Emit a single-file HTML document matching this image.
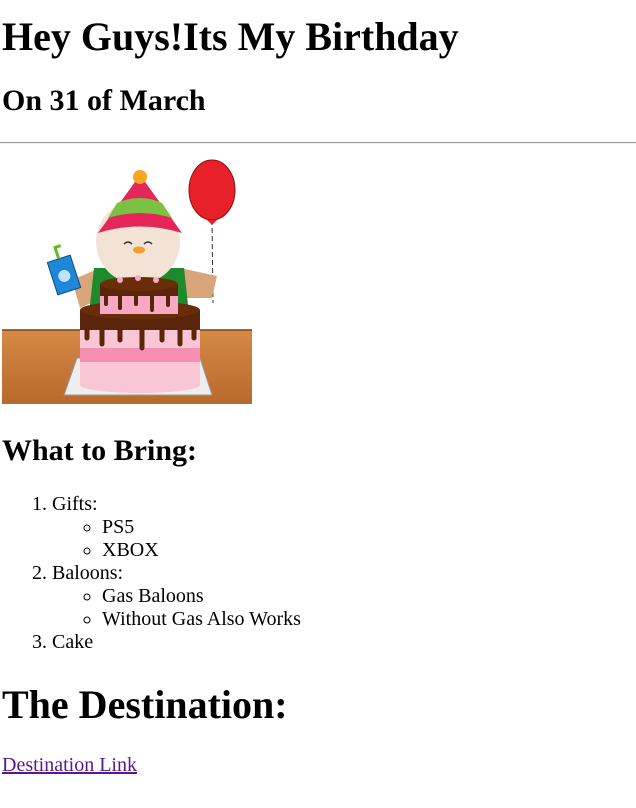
<!DOCTYPE html>
<html><head><meta charset="utf-8"><style>
html,body{margin:0;padding:0;background:#fff;}
body{margin:0 2px;font-family:"Liberation Serif",serif;font-size:20px;color:#000;}
h1{font-size:40px;margin:14px 0 0;line-height:46px;}
h2{font-size:30px;margin:24px 0 0;line-height:34px;}
hr{margin:24px -2px 0;border:0;border-top:1px solid #9a9a9a;border-bottom:1px solid #eee;height:0;}
.img{display:block;margin-top:14px;}
ol{margin:25px 0 0;padding-left:50px;line-height:23px;}
ul{margin:0;padding-left:50px;list-style:circle;}
a{color:#551a8b;}
</style></head><body>
<h1>Hey Guys!Its My Birthday</h1>
<h2>On 31 of March</h2>
<hr>
<svg class="img" width="250" height="246" viewBox="0 0 250 246">
<defs><linearGradient id="w" x1="0" y1="0" x2="0" y2="1"><stop offset="0" stop-color="#d58a45"/><stop offset="1" stop-color="#b8692c"/></linearGradient></defs>
<rect x="0" y="172" width="250" height="74" fill="url(#w)"/>
<line x1="0" y1="172" x2="250" y2="172" stroke="#7a4515" stroke-width="1.5"/>
<line x1="210" y1="62" x2="211" y2="145" stroke="#333" stroke-width="1" stroke-dasharray="5,3"/>
<ellipse cx="210" cy="32" rx="23" ry="30" fill="#e8202a" stroke="#8a1010" stroke-width="1"/>
<path d="M205 62 L215 62 L210 67Z" fill="#e8202a"/>
<path d="M70 122 L98 110 L100 140 L78 150Z" fill="#d9a57a"/>
<path d="M178 110 L215 118 L210 140 L182 140Z" fill="#d9a57a"/>
<path d="M92 110 L182 110 L188 165 L86 165Z" fill="#1e8a2e"/>
<circle cx="136" cy="84" r="42" fill="#f3e2d6"/>
<path d="M96 75 L138 17 L180 75 Q138 62 96 75Z" fill="#e5265a"/>
<path d="M115 45 Q138 35 160 45 L170 60 Q138 50 106 60Z" fill="#7bc142"/>
<circle cx="138" cy="19" r="7" fill="#f5a623"/>
<path d="M122 86 Q126 82 130 86 M142 86 Q146 82 150 86" stroke="#333" stroke-width="1.5" fill="none"/>
<ellipse cx="137" cy="92" rx="6" ry="3.5" fill="#f0a030"/>
<g transform="rotate(-18 62 117)"><rect x="50" y="100" width="24" height="34" fill="#1e88d6" stroke="#0a4a88"/><circle cx="62" cy="118" r="6" fill="#bfe3ff"/><path d="M62 100 L62 88 L68 88" stroke="#6ab820" stroke-width="3" fill="none"/></g>
<path d="M62 237 L210 237 L198 200 L75 200Z" fill="#eee" stroke="#999"/>
<rect x="78" y="165" width="120" height="62" fill="#f9c6d6"/>
<ellipse cx="138" cy="227" rx="60" ry="8" fill="#f9c6d6"/>
<rect x="78" y="190" width="120" height="14" fill="#f78fb3"/>
<rect x="78" y="152" width="120" height="20" fill="#5a2508"/>
<ellipse cx="138" cy="152" rx="60" ry="9" fill="#6a2d0a"/>
<path d="M85 172 v8 M100 172 v14 M118 172 v10 M140 172 v18 M160 172 v10 M178 172 v14 M192 172 v8" stroke="#5a2508" stroke-width="5" stroke-linecap="round"/>
<rect x="98" y="128" width="78" height="28" fill="#f6a9c4"/>
<rect x="98" y="126" width="78" height="12" fill="#5a2508"/>
<ellipse cx="137" cy="126" rx="39" ry="7" fill="#6a2d0a"/>
<path d="M104 138 v8 M118 138 v12 M134 138 v8 M150 138 v14 M166 138 v9" stroke="#5a2508" stroke-width="4" stroke-linecap="round"/>
<circle cx="118" cy="122" r="3" fill="#f6a9c4"/><circle cx="136" cy="120" r="3" fill="#f6a9c4"/><circle cx="154" cy="122" r="3" fill="#f6a9c4"/>
</svg>
<h2 style="margin-top:30px">What to Bring:</h2>
<ol>
<li>Gifts:<ul><li>PS5</li><li>XBOX</li></ul></li>
<li>Baloons:<ul><li>Gas Baloons</li><li>Without Gas Also Works</li></ul></li>
<li>Cake</li>
</ol>
<h1 style="margin-top:28px">The Destination:</h1>
<p style="margin:26px 0 0;line-height:23px"><a href="#">Destination Link</a></p>
</body></html>
